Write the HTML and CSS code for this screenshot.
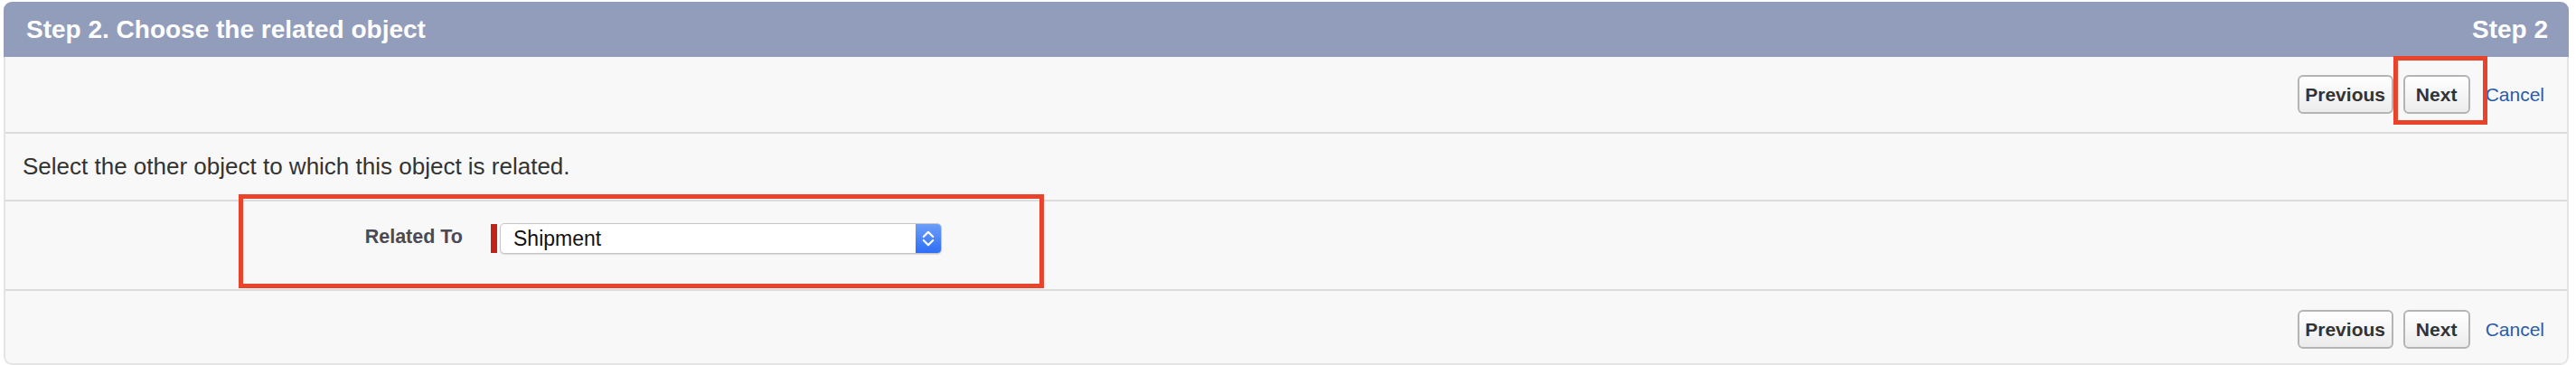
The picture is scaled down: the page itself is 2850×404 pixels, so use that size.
FILE: index.html
```html
<!DOCTYPE html>
<html lang="en">
<head>
<meta charset="utf-8">
<title>Step 2. Choose the related object</title>
<link rel="stylesheet" href="styles.css">
</head>
<body>
<div class="page">
  <div class="panel">
    <div class="panel-header">
      <h2 class="panel-title">Step 2. Choose the related object</h2>
      <span class="panel-step">Step 2</span>
    </div>
    <div class="panel-body">
      <div class="button-row button-row-top">
        <button class="btn btn-prev" type="button">Previous</button>
        <button class="btn btn-next" type="button">Next</button>
        <a class="cancel-link" href="#">Cancel</a>
      </div>
      <div class="instruction-row">Select the other object to which this object is related.</div>
      <div class="form-row">
        <label class="form-label" for="relatedTo">Related To</label>
        <div class="field">
          <span class="required-bar"></span>
          <div class="select-box" id="relatedTo">
            <span class="select-value">Shipment</span>
            <span class="select-arrows">
              <svg width="14" height="22" viewBox="0 0 14 22" aria-hidden="true">
                <path d="M1.8 9 L7 3.8 L12.2 9" fill="none" stroke="#fff" stroke-width="2.2" stroke-linecap="round" stroke-linejoin="round"/>
                <path d="M1.8 13 L7 18.2 L12.2 13" fill="none" stroke="#fff" stroke-width="2.2" stroke-linecap="round" stroke-linejoin="round"/>
              </svg>
            </span>
          </div>
        </div>
      </div>
      <div class="button-row button-row-bottom">
        <button class="btn btn-prev" type="button">Previous</button>
        <button class="btn btn-next" type="button">Next</button>
        <a class="cancel-link" href="#">Cancel</a>
      </div>
    </div>
    <div class="annotation annotation-form"></div>
    <div class="annotation annotation-next"></div>
  </div>
</div>
</body>
</html>
```

FILE: styles.css
```css
html, body {
  margin: 0;
  padding: 0;
  background: #ffffff;
}

body {
  font-family: "Liberation Sans", Arial, Helvetica, sans-serif;
}

.page {
  padding: 2px 8px 0 4px;
}

.panel {
  position: relative;
  border-radius: 9px;
  overflow: hidden;
  background: #f8f8f8;
}

.panel-header {
  height: 61px;
  background: #929dbb;
  display: flex;
  align-items: center;
  justify-content: space-between;
  padding: 0 23px 0 25px;
  color: #ffffff;
}

.panel-title {
  margin: 0;
  font-size: 28px;
  font-weight: bold;
}

.panel-step {
  font-size: 28px;
  font-weight: bold;
}

.panel-body {
  border: 2px solid #e4e4e4;
  border-top: none;
  border-radius: 0 0 9px 9px;
  background: #f8f8f8;
}

.button-row {
  display: flex;
  justify-content: flex-end;
  align-items: center;
  padding-right: 25px;
}

.button-row-top {
  height: 83px;
  border-bottom: 2px solid #dcdcdc;
}

.button-row-bottom {
  box-sizing: border-box;
  height: 80px;
  align-items: flex-start;
  padding-top: 21px;
}

.btn {
  height: 43px;
  border: 2px solid #b4b4b4;
  border-radius: 6px;
  background: linear-gradient(#ffffff, #ececec);
  font-family: "Liberation Sans", Arial, Helvetica, sans-serif;
  font-size: 21px;
  font-weight: bold;
  color: #333333;
  padding: 0;
  text-align: center;
}

.btn-prev {
  width: 106px;
}

.btn-next {
  width: 74px;
  margin-left: 11px;
}

.cancel-link {
  margin-left: 17px;
  font-size: 21px;
  line-height: 43px;
  color: #2a5ca8;
  text-decoration: none;
}

.instruction-row {
  height: 73px;
  display: flex;
  align-items: center;
  padding-left: 19px;
  font-size: 26px;
  color: #333333;
  border-bottom: 2px solid #dcdcdc;
}

.form-row {
  display: flex;
  align-items: flex-start;
  border-bottom: 2px solid #dcdcdc;
  box-sizing: border-box;
  height: 99px;
  padding-top: 24px;
}

.form-label {
  width: 506px;
  text-align: right;
  font-size: 21.5px;
  font-weight: bold;
  color: #4a4a56;
  padding-top: 3px;
}

.field {
  display: flex;
  align-items: center;
  margin-left: 31px;
}

.required-bar {
  width: 7px;
  height: 32px;
  background: #c0231c;
  margin-right: 3px;
}

.select-box {
  width: 489px;
  height: 34px;
  box-sizing: border-box;
  border: 1px solid #c6c6c6;
  border-radius: 5px;
  background: #ffffff;
  box-shadow: 0 1px 1px rgba(0, 0, 0, 0.12);
  display: flex;
  align-items: center;
  justify-content: space-between;
  overflow: hidden;
}

.select-value {
  padding-left: 14px;
  font-size: 23px;
  color: #111111;
}

.select-arrows {
  width: 28px;
  height: 34px;
  background: linear-gradient(#6ea0f8, #2c6cf6);
  display: flex;
  align-items: center;
  justify-content: center;
}

.annotation {
  position: absolute;
  border: 5px solid #e9432b;
  box-sizing: border-box;
  pointer-events: none;
}

.annotation-form {
  left: 260px;
  top: 213px;
  width: 891px;
  height: 104px;
}

.annotation-next {
  left: 2644px;
  top: 60px;
  width: 104px;
  height: 76px;
}
```
